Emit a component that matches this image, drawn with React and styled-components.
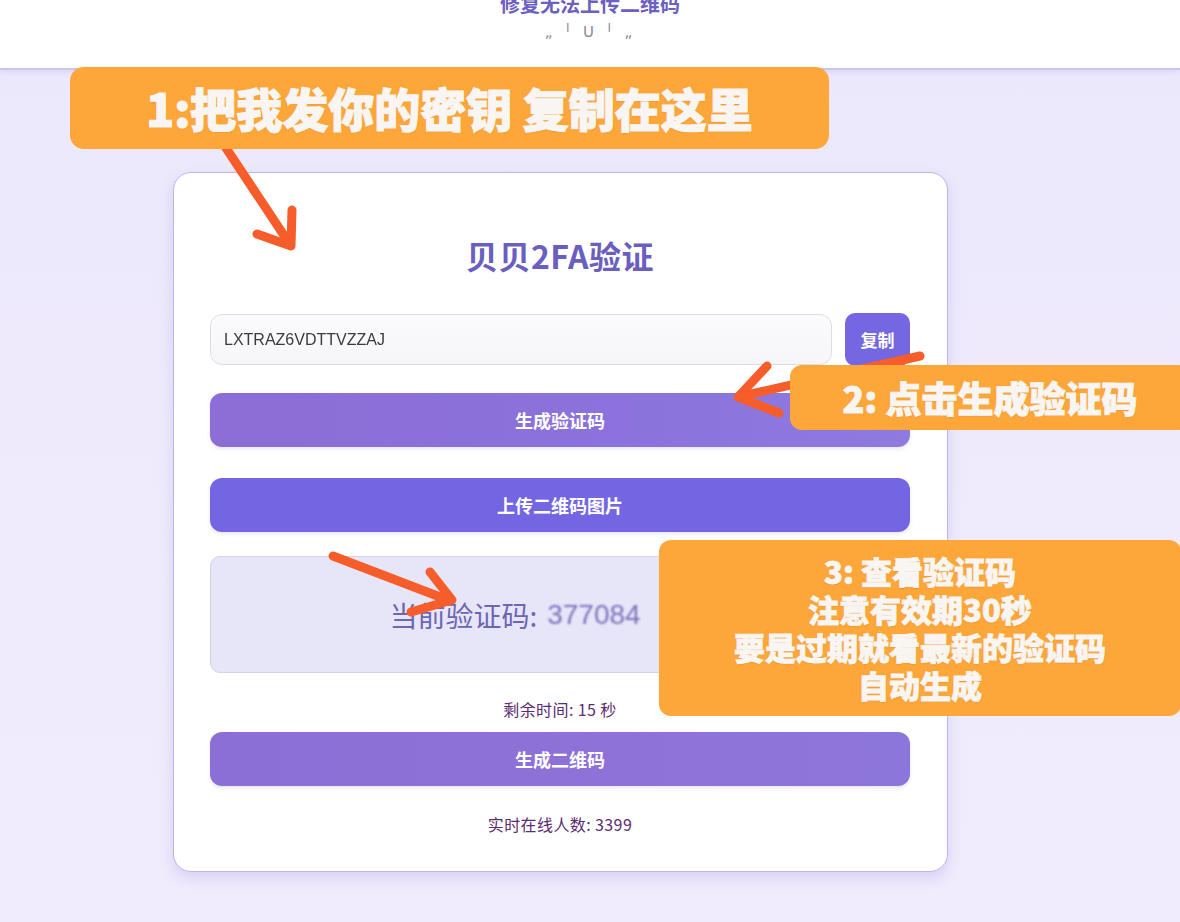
import React from "react";
import styled, { createGlobalStyle } from "styled-components";

const GlobalStyle = createGlobalStyle`
  html, body {
    margin: 0;
    padding: 0;
    background: #efebfc;
    font-family: "Noto Sans CJK SC", "Noto Sans", sans-serif;
  }
`;

const Page = styled.div`
  position: relative;
  width: 1180px;
  height: 922px;
  overflow: hidden;
  background: linear-gradient(180deg, #ece8fb 0%, #efebfd 60%, #f0ecfd 100%);
`;

const Header = styled.header`
  height: 68px;
  background: #ffffff;
  border-bottom: 2px solid #cbc4ee;
  box-shadow: 0 2px 6px rgba(120, 100, 200, 0.15);
  display: flex;
  flex-direction: column;
  align-items: center;
`;

const HeaderTitle = styled.div`
  margin-top: -10px;
  font-size: 20px;
  font-weight: 700;
  color: #6c60c2;
  line-height: 28px;
`;

const Face = styled.div`
  margin-top: 5px;
  font-family: "DejaVu Sans", sans-serif;
  font-size: 15px;
  color: #8a8a9a;
  letter-spacing: 3px;
`;

const Main = styled.main`
  display: flex;
  justify-content: flex-start;
  padding: 102px 0 0 173px;
`;

const Card = styled.section`
  width: 700px;
  padding: 0 37px 0 36px;
  height: 698px;
  background: #ffffff;
  border: 1.5px solid #bdb5ea;
  border-radius: 18px;
  box-shadow: 0 6px 14px rgba(130, 110, 210, 0.22);
  display: flex;
  flex-direction: column;
  align-items: stretch;
`;

const Title = styled.h1`
  margin: 61px 0 0;
  text-align: center;
  font-size: 32px;
  line-height: 42px;
  font-weight: 700;
  letter-spacing: 0.5px;
  color: #6a5ec0;
`;

const InputRow = styled.div`
  margin-top: 37px;
  display: flex;
  align-items: center;
  gap: 13px;
`;

const KeyInput = styled.div`
  flex: 1;
  height: 51px;
  box-sizing: border-box;
  border: 1px solid #dcdce4;
  border-radius: 12px;
  background: linear-gradient(180deg, #fbfbfd 0%, #f6f6f9 100%);
  display: flex;
  align-items: center;
  padding-left: 13px;
  font-family: "Liberation Sans", sans-serif;
  font-size: 16px;
  color: #3a3a40;
  filter: blur(0.5px);
`;

const CopyButton = styled.button`
  width: 65px;
  height: 53px;
  border: none;
  border-radius: 10px;
  background: #7566e2;
  color: #ffffff;
  font-family: inherit;
  font-size: 17px;
  font-weight: 700;
`;

const WideButton = styled.button`
  margin-top: ${(p) => p.$gap}px;
  height: 54px;
  border: none;
  border-radius: 12px;
  background: ${(p) => p.$bg};
  color: #ffffff;
  font-family: inherit;
  font-size: 18px;
  font-weight: 700;
  box-shadow: 0 2px 4px rgba(110, 90, 200, 0.15);
`;

const CodeBox = styled.div`
  margin-top: 24px;
  height: 117px;
  box-sizing: border-box;
  border: 1px solid #d4d2ea;
  border-radius: 10px;
  background: #e7e6f8;
  display: flex;
  align-items: center;
  justify-content: center;
  padding-right: 90px;
  font-size: 28px;
  color: #6d66b3;
`;

const Digits = styled.span`
  margin-left: 10px;
  font-family: "Liberation Sans", sans-serif;
  color: #7a72bd;
  filter: blur(1.2px);
`;

const Info = styled.div`
  margin-top: ${(p) => p.$gap}px;
  text-align: center;
  font-size: 16px;
  letter-spacing: 0.4px;
  line-height: 22px;
  color: #5b2c70;
`;

const Callout = styled.div`
  position: absolute;
  left: ${(p) => p.$x}px;
  top: ${(p) => p.$y}px;
  width: ${(p) => p.$w}px;
  height: ${(p) => p.$h}px;
  box-sizing: border-box;
  background: #fda63a;
  border-radius: ${(p) => p.$r || 12}px;
  display: flex;
  flex-direction: column;
  align-items: center;
  justify-content: center;
  color: #f8f5f2;
  font-weight: 900;
  font-size: ${(p) => p.$size}px;
  line-height: ${(p) => p.$lh || "1.2"};
  text-align: center;
  white-space: nowrap;
  -webkit-text-stroke: ${(p) => p.$stroke || 1}px #f8f5f2;
  text-shadow: 0 1px 1px rgba(160, 90, 20, 0.25);
`;

const Arrows = styled.svg`
  position: absolute;
  left: 0;
  top: 0;
  pointer-events: none;
`;

export default function App() {
  return (
    <>
      <GlobalStyle />
      <Page>
        <Header>
          <HeaderTitle>修复无法上传二维码</HeaderTitle>
          <Face>„ ╵ ᑌ ╵ „</Face>
        </Header>
        <Main>
          <Card>
            <Title>贝贝2FA验证</Title>
            <InputRow>
              <KeyInput>LXTRAZ6VDTTVZZAJ</KeyInput>
              <CopyButton>复制</CopyButton>
            </InputRow>
            <WideButton $gap={27} $bg="linear-gradient(90deg, #8d6dd6 0%, #8b72dc 60%, #8f7ae0 100%)">
              生成验证码
            </WideButton>
            <WideButton $gap={31} $bg="#7466e3">
              上传二维码图片
            </WideButton>
            <CodeBox>
              当前验证码:<Digits>377084</Digits>
            </CodeBox>
            <Info $gap={25}>剩余时间: 15 秒</Info>
            <WideButton $gap={12} $bg="linear-gradient(90deg, #8b6fd6 0%, #8f72d8 60%, #8d76db 100%)">
              生成二维码
            </WideButton>
            <Info $gap={27}>实时在线人数: 3399</Info>
          </Card>
        </Main>

        <Arrows width="1180" height="922" viewBox="0 0 1180 922">
          <g
            fill="none"
            stroke="#f65d2b"
            strokeWidth="9"
            strokeLinecap="round"
            strokeLinejoin="round"
          >
            <path d="M226 148 L289 243" />
            <path d="M257 234 L291 246 L292 210" />
            <path d="M920 356 L742 396" />
            <path d="M767 366 L738 397 L779 413" />
            <path d="M333 556 L448 600" />
            <path d="M430 572 L452 600 L411 612" />
          </g>
        </Arrows>

        <Callout $x={70} $y={67} $w={759} $h={82} $size={46} $r={14} $stroke={1.2}>
          1:把我发你的密钥 复制在这里
        </Callout>
        <Callout $x={790} $y={365} $w={400} $h={65} $size={36}>
          2: 点击生成验证码
        </Callout>
        <Callout $x={659} $y={540} $w={522} $h={176} $size={31} $lh="38px" $stroke={0.8}>
          <div>3: 查看验证码</div>
          <div>注意有效期30秒</div>
          <div>要是过期就看最新的验证码</div>
          <div>自动生成</div>
        </Callout>
      </Page>
    </>
  );
}
